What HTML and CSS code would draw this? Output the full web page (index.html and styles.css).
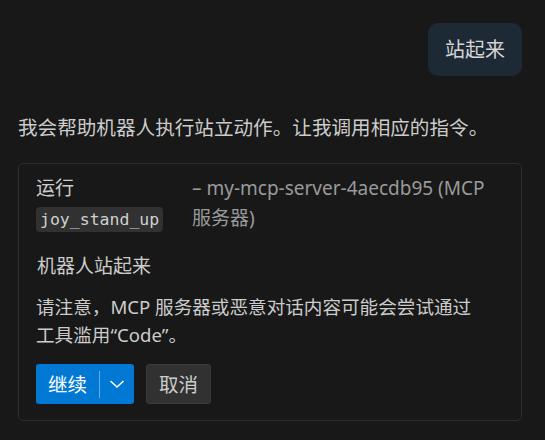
FILE: index.html
```html
<!DOCTYPE html>
<html lang="zh-CN">
<head>
<meta charset="utf-8">
<link rel="stylesheet" href="styles.css">
</head>
<body>
<div class="chat">
  <div class="user-row">
    <div class="bubble">站起来</div>
  </div>
  <p class="reply">我会帮助机器人执行站立动作。让我调用相应的指令。</p>
  <div class="card">
    <div class="head">
      <div class="head-left">
        <div>运行</div>
        <div><code class="chip">joy_stand_up</code></div>
      </div>
      <div class="head-right">– my-mcp-server-4aecdb95 (MCP<br>服务器)</div>
    </div>
    <div class="title">机器人站起来</div>
    <div class="warn">请注意，MCP 服务器或恶意对话内容可能会尝试通过<br>工具滥用“Code”。</div>
    <div class="actions">
      <div class="btn-primary">
        <span class="btn-label">继续</span>
        <span class="btn-sep"></span>
        <span class="btn-drop">
          <svg width="16" height="10" viewBox="0 0 16 10"><path d="M1.5 2 L8 8 L14.5 2" fill="none" stroke="#ffffff" stroke-width="1.6"/></svg>
        </span>
      </div>
      <div class="btn-secondary">取消</div>
    </div>
  </div>
</div>
</body>
</html>
```
FILE: styles.css
```css
html, body {
  margin: 0;
  padding: 0;
  background: #181818;
}
body {
  font-family: "Noto Sans", "Noto Sans CJK SC", sans-serif;
  font-size: 19px;
  color: #cccccc;
  line-height: 27px;
}
.chat {
  padding: 23px 23px 0 18px;
}
.user-row {
  display: flex;
  justify-content: flex-end;
}
.bubble {
  background: #1e2936;
  border-radius: 10px;
  padding: 13px 17px;
  font-size: 20px;
  color: #d4d4d4;
}
.reply {
  margin: 38px 0 0 0;
  font-size: 19.6px;
}
.card {
  margin-top: 22px;
  border: 1px solid #2e2e2e;
  border-radius: 5px;
  padding: 9px 17px 16px 17px;
}
.head {
  display: flex;
  line-height: 30px;
}
.head-left {
  width: 156px;
  flex: none;
}
.head-right {
  color: #9a9a9a;
  flex: 1;
}
.chip {
  font-family: "DejaVu Sans Mono", monospace;
  font-size: 16.5px;
  background: #313131;
  border-radius: 4px;
  padding: 3px 4px;
  color: #d0d0d0;
}
.title {
  margin-top: 18px;
  padding-left: 1px;
}
.warn {
  margin-top: 13px;
  line-height: 28px;
  font-size: 18.6px;
}
.actions {
  margin-top: 15px;
  display: flex;
  gap: 12px;
}
.btn-primary {
  display: flex;
  align-items: center;
  background: #0078d4;
  border-radius: 3px;
  height: 40px;
  color: #ffffff;
  font-size: 19.5px;
}
.btn-label {
  padding: 0 12px 0 12px;
}
.btn-sep {
  width: 1px;
  height: 27px;
  background: rgba(255, 255, 255, 0.4);
}
.btn-drop {
  display: flex;
  align-items: center;
  padding: 0 9px 0 9px;
}
.btn-secondary {
  display: flex;
  align-items: center;
  height: 38px;
  padding: 0 12px;
  background: #313131;
  border: 1px solid #3a3a3a;
  border-radius: 3px;
  color: #cccccc;
  font-size: 19.5px;
}
```
